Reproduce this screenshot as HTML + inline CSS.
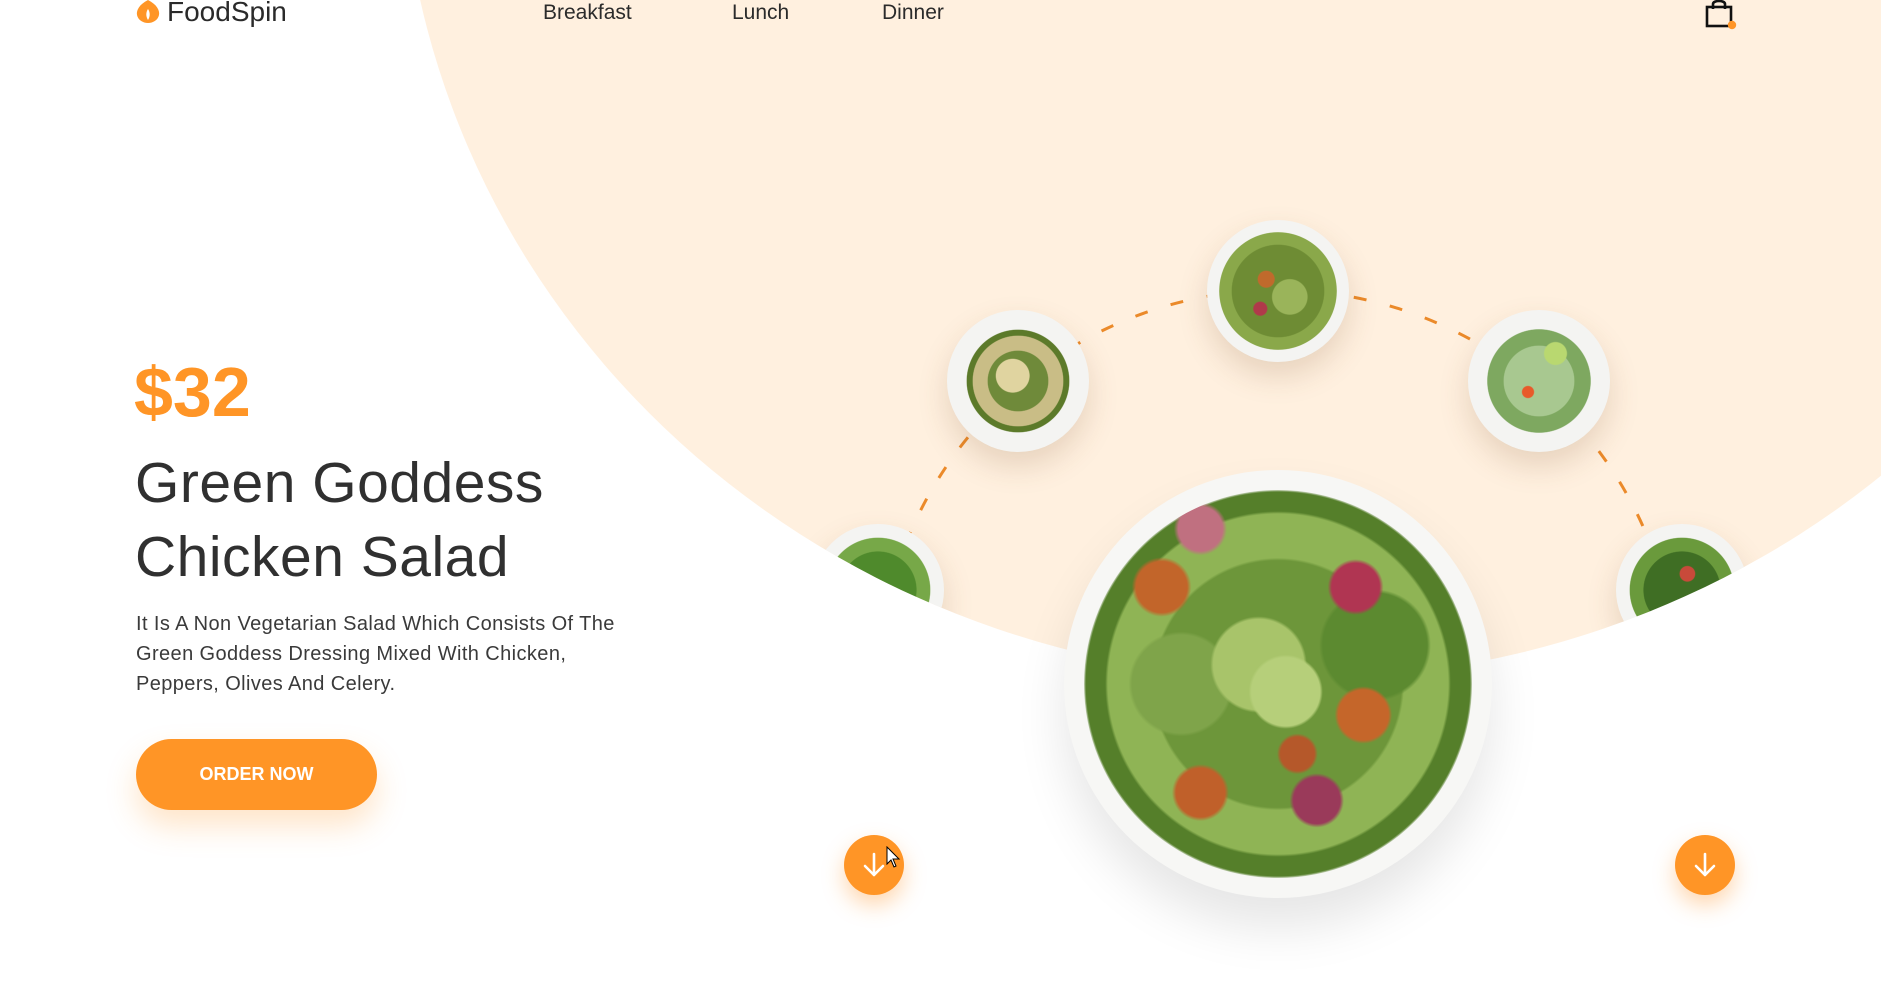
<!DOCTYPE html>
<html><head><meta charset="utf-8"><style>
html,body{margin:0;padding:0;overflow:hidden;width:1887px;height:995px}
body{position:relative;background:#fff;font-family:"Liberation Sans",sans-serif}
.peach{position:absolute;left:400px;top:-1041px;width:1800px;height:1720px;border-radius:50%;background:#fff0df;overflow:hidden}
.strip{position:absolute;right:0;top:0;width:6px;height:995px;background:#fff}
.abs{position:absolute}
.nav{position:absolute;top:0;font-size:21px;color:#2b2b2b;line-height:26px}
.plate{position:absolute;border-radius:50%;background:#f4f4f2;box-shadow:0 14px 30px rgba(120,80,40,.18)}
.salad{position:absolute;border-radius:50%}
.btn{position:absolute;border-radius:50%;background:#ff9526;box-shadow:0 10px 22px rgba(255,140,30,.35)}
</style></head><body>
<div class="peach">
  <svg class="abs" style="left:-400px;top:1041px" width="1887" height="995">
    <circle cx="1278" cy="690" r="400" fill="none" stroke="#eb8a2a" stroke-width="3" stroke-dasharray="13 24"/>
  </svg>
  <div class="plate" style="left:807px;top:1261px;width:142px;height:142px"><div class="salad" style="left:12px;top:12px;width:118px;height:118px;background:radial-gradient(circle at 40% 40%,#c06a2c 0 8%,transparent 9%),radial-gradient(circle at 60% 55%,#9ab45a 0 18%,transparent 19%),radial-gradient(circle at 35% 65%,#b03a4a 0 6%,transparent 7%),radial-gradient(circle,#6e8c34 0 55%,#8aa84a 56% 70%,transparent 71%)"></div></div>
  <div class="plate" style="left:547px;top:1351px;width:142px;height:142px"><div class="salad" style="left:18px;top:18px;width:106px;height:106px;background:radial-gradient(circle at 45% 45%,#e0d4a0 0 20%,transparent 21%),radial-gradient(circle,#6f8a3a 0 40%,#c9bd86 41% 60%,#5c7a2a 61% 68%,transparent 69%)"></div></div>
  <div class="plate" style="left:1068px;top:1351px;width:142px;height:142px"><div class="salad" style="left:16px;top:16px;width:110px;height:110px;background:radial-gradient(circle at 65% 25%,#b9d870 0 10%,transparent 11%),radial-gradient(circle at 40% 60%,#e85a2a 0 6%,transparent 7%),radial-gradient(circle,#a8c890 0 45%,#7ea860 46% 66%,transparent 67%)"></div></div>
  <div class="plate" style="left:412px;top:1565px;width:132px;height:132px"><div class="salad" style="left:12px;top:12px;width:108px;height:108px;background:radial-gradient(circle at 40% 50%,#e07a3a 0 8%,transparent 9%),radial-gradient(circle,#4f8a2c 0 50%,#77a848 51% 68%,transparent 69%)"></div></div>
  <div class="plate" style="left:1216px;top:1565px;width:132px;height:132px"><div class="salad" style="left:12px;top:12px;width:108px;height:108px;background:radial-gradient(circle at 55% 35%,#c84a3a 0 8%,transparent 9%),radial-gradient(circle,#3f6e24 0 50%,#6a9a3c 51% 68%,transparent 69%)"></div></div>
</div>
<div class="strip"></div>

<div class="plate" style="left:1064px;top:470px;width:428px;height:428px;background:#f7f7f5;box-shadow:0 30px 50px rgba(0,0,0,.10)">
  <div class="salad" style="left:20px;top:20px;width:388px;height:388px;background:
   radial-gradient(circle at 52% 52%,#b6cf7a 0 12%,transparent 13%),
   radial-gradient(circle at 45% 45%,#a8c46a 0 15%,transparent 16%),
   radial-gradient(circle at 20% 25%,#c2652a 0 6%,transparent 7%),
   radial-gradient(circle at 72% 58%,#c5662a 0 7%,transparent 8%),
   radial-gradient(circle at 30% 78%,#c0602a 0 6%,transparent 7%),
   radial-gradient(circle at 55% 68%,#b5582a 0 5%,transparent 6%),
   radial-gradient(circle at 70% 25%,#b03552 0 6%,transparent 7%),
   radial-gradient(circle at 30% 10%,#c07080 0 5%,transparent 6%),
   radial-gradient(circle at 60% 80%,#9a3a5a 0 6%,transparent 7%),
   radial-gradient(circle at 25% 50%,#7fa44a 0 14%,transparent 15%),
   radial-gradient(circle at 75% 40%,#5c8a30 0 14%,transparent 15%),
   radial-gradient(circle,#6d963a 0 45%,#8fb455 46% 62%,#557f2a 63% 70%,transparent 71%)"></div>
</div>

<svg class="abs" style="left:136px;top:0" width="24" height="24" viewBox="0 0 24 24"><path d="M12 0 C20 4 24 10 23 15 C22 20 17 23 12 23 C7 23 2 20 1 15 C0 10 4 4 12 0Z" fill="#ff9526"/><path d="M12 9 C14 12 14.5 16 12 20 C9.5 16 10 12 12 9Z" fill="#fff"/></svg>
<div class="abs" style="left:167px;top:-3px;font-size:28px;color:#2a2a2a;line-height:30px">FoodSpin</div>
<div class="nav" style="left:543px">Breakfast</div>
<div class="nav" style="left:732px">Lunch</div>
<div class="nav" style="left:882px">Dinner</div>
<svg class="abs" style="left:1703px;top:0" width="36" height="32" viewBox="0 0 36 32"><rect x="4" y="7" width="24" height="19" fill="none" stroke="#111" stroke-width="2.6"/><path d="M10 9 V4 C10 0 22 0 22 4 V9" fill="none" stroke="#111" stroke-width="2.6"/><circle cx="29" cy="25" r="4.2" fill="#ff9526"/></svg>

<div class="abs" style="left:134px;top:352px;font-size:70px;font-weight:bold;color:#ff9526;line-height:80px">$32</div>
<div class="abs" style="left:135px;top:446px;font-size:57px;color:#303030;line-height:74px;letter-spacing:0.5px">Green Goddess<br>Chicken Salad</div>
<div class="abs" style="left:136px;top:609px;font-size:20px;letter-spacing:0.4px;color:#3a3a3a;line-height:30px;white-space:nowrap">It Is A Non Vegetarian Salad Which Consists Of The<br>Green Goddess Dressing Mixed With Chicken,<br>Peppers, Olives And Celery.</div>
<div class="abs" style="left:136px;top:739px;width:241px;height:71px;border-radius:36px;background:#ff9526;box-shadow:0 16px 30px rgba(255,150,40,.25);color:#fff;font-weight:bold;font-size:18px;line-height:71px;text-align:center">ORDER NOW</div>

<div class="btn" style="left:844px;top:835px;width:60px;height:60px"><svg width="60" height="60"><path d="M30 19 V40 M21 31 L30 40 L39 31" fill="none" stroke="#fff" stroke-width="2.6" stroke-linecap="round" stroke-linejoin="round"/></svg></div>
<div class="btn" style="left:1675px;top:835px;width:60px;height:60px"><svg width="60" height="60"><path d="M30 19 V40 M21 31 L30 40 L39 31" fill="none" stroke="#fff" stroke-width="2.6" stroke-linecap="round" stroke-linejoin="round"/></svg></div>
<svg class="abs" style="left:886px;top:846px" width="16" height="24"><path d="M1 1 L1 18 L5 14 L8 21 L10 20 L7 13 L13 13 Z" fill="#fff" stroke="#000" stroke-width="1"/></svg>
</body></html>
